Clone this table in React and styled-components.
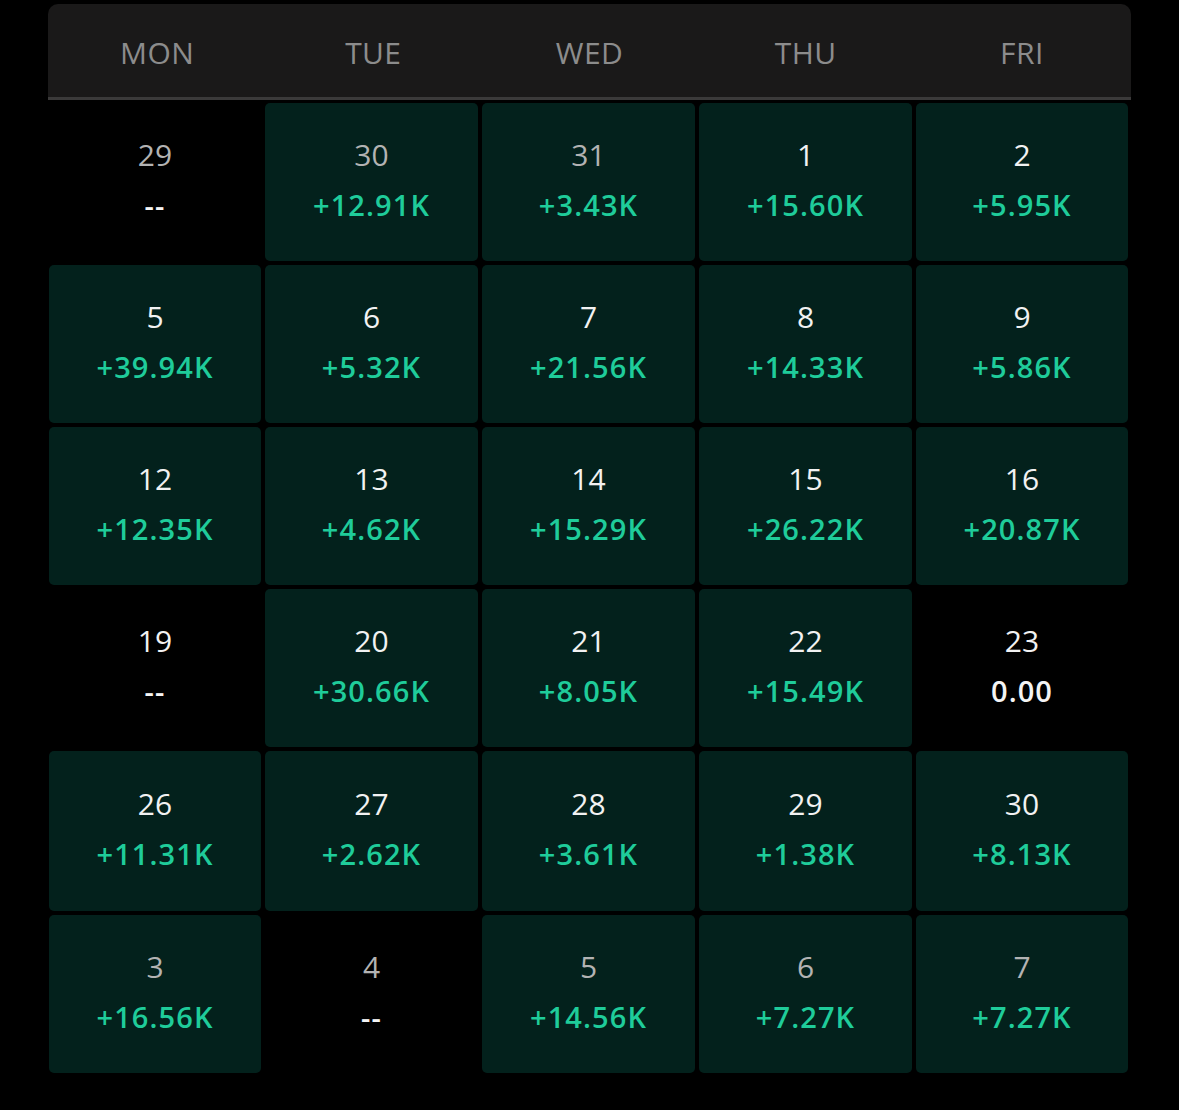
import React from "react";
import styled, { createGlobalStyle } from "styled-components";

const GlobalStyle = createGlobalStyle`
  html, body {
    margin: 0;
    padding: 0;
    background: #000;
  }
  body {
    font-family: "Open Sans", "Noto Sans", sans-serif;
  }
`;

const Page = styled.div`
  width: 1179px;
  height: 1110px;
  padding: 4px 48px 0 48px;
  box-sizing: border-box;
  background: #000;
`;

const Calendar = styled.div`
  width: 1083px;
`;

const Header = styled.div`
  display: grid;
  grid-template-columns: repeat(5, 1fr);
  height: 96px;
  box-sizing: border-box;
  padding: 3px 1px 0 1px;
  background: #1a1919;
  border-radius: 10px 10px 0 0;
  border-bottom: 3px solid #3b3a3a;
`;

const DayName = styled.div`
  display: flex;
  align-items: center;
  justify-content: center;
  color: #8c8c8c;
  font-size: 30px;
  letter-spacing: 0.4px;
`;

const Grid = styled.div`
  display: grid;
  grid-template-columns: 212px 213px 213px 213px 212px;
  grid-template-rows: repeat(4, 158px) 160px 158px;
  column-gap: 4px;
  row-gap: 4px;
  padding: 3px 1px 0 1px;
`;

const Cell = styled.div`
  display: flex;
  flex-direction: column;
  align-items: center;
  justify-content: center;
  gap: 8px;
  border-radius: 5px;
  background: ${(p) => (p.$active ? "#03211c" : "transparent")};
  padding-bottom: 4px;
`;

const DateNum = styled.div`
  font-size: 30px;
  line-height: 42px;
  color: ${(p) => (p.$muted ? "#b3b3b3" : "#f2f2f2")};
`;

const Value = styled.div`
  font-size: 29px;
  line-height: 42px;
  font-weight: 600;
  letter-spacing: 1.1px;
  color: ${(p) => (p.$empty ? "#f4f4f4" : "#1fcc9a")};
`;

const days = ["MON", "TUE", "WED", "THU", "FRI"];

const cells = [
  ["29", "--", true],
  ["30", "+12.91K", true],
  ["31", "+3.43K", true],
  ["1", "+15.60K"],
  ["2", "+5.95K"],
  ["5", "+39.94K"],
  ["6", "+5.32K"],
  ["7", "+21.56K"],
  ["8", "+14.33K"],
  ["9", "+5.86K"],
  ["12", "+12.35K"],
  ["13", "+4.62K"],
  ["14", "+15.29K"],
  ["15", "+26.22K"],
  ["16", "+20.87K"],
  ["19", "--"],
  ["20", "+30.66K"],
  ["21", "+8.05K"],
  ["22", "+15.49K"],
  ["23", "0.00"],
  ["26", "+11.31K"],
  ["27", "+2.62K"],
  ["28", "+3.61K"],
  ["29", "+1.38K"],
  ["30", "+8.13K"],
  ["3", "+16.56K", true],
  ["4", "--", true],
  ["5", "+14.56K", true],
  ["6", "+7.27K", true],
  ["7", "+7.27K", true],
];

export default function App() {
  return (
    <>
      <GlobalStyle />
      <Page>
        <Calendar>
          <Header>
            {days.map((d) => (
              <DayName key={d}>{d}</DayName>
            ))}
          </Header>
          <Grid>
            {cells.map(([date, value, muted], i) => {
              const active = value.startsWith("+");
              return (
                <Cell key={i} $active={active}>
                  <DateNum $muted={muted}>{date}</DateNum>
                  <Value $empty={!active}>{value}</Value>
                </Cell>
              );
            })}
          </Grid>
        </Calendar>
      </Page>
    </>
  );
}
